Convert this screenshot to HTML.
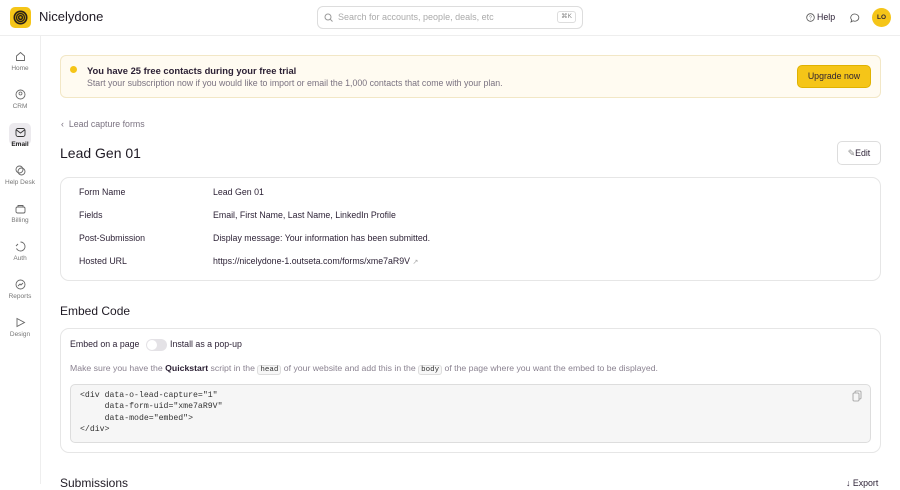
<!DOCTYPE html>
<html><head><style>
*{box-sizing:border-box;margin:0;padding:0}
body{width:900px;height:484px;overflow:hidden;background:#fff;font-family:"Liberation Sans",sans-serif;color:#2a1f33;position:relative;font-size:9px}
.abs{position:absolute}
.hdr{left:0;top:0;width:900px;height:36px;border-bottom:1px solid #eee}
.side{left:0;top:36px;width:41px;height:448px;border-right:1px solid #eee}
.nav{position:absolute;left:0;width:40px;text-align:center;font-size:6.5px;color:#777}
.nav svg{display:block;margin:0 auto 3px}
.card{border:1px solid #e6e6e6;border-radius:9px}
.lbl{position:absolute;left:79px;font-size:8.8px;color:#2a1f33}
.val{position:absolute;left:213px;font-size:8.8px;color:#2a1f33}
code.k{font-family:"Liberation Mono",monospace;font-size:7.5px;border:1px solid #ddd;background:#f7f7f7;border-radius:3px;padding:0 2px;color:#333}
</style></head><body>
<div class="abs hdr"></div>
<div class="abs" style="left:10px;top:7px;width:21px;height:21px;border-radius:5px;background:#f5c518"><svg width="21" height="21" viewBox="0 0 21 21"><circle cx="10.5" cy="10.5" r="7" fill="#2a1f1a"/><circle cx="10.5" cy="10.5" r="5" fill="none" stroke="#c9a000" stroke-width=".8"/><circle cx="10.5" cy="10.5" r="3" fill="none" stroke="#c9a000" stroke-width=".8"/><circle cx="10.5" cy="10.5" r="1.2" fill="#c9a000"/></svg></div>
<div class="abs" style="left:39px;top:9px;font-size:13px;color:#1f1a24">Nicelydone</div>
<div class="abs" style="left:317px;top:6px;width:266px;height:23px;border:1px solid #ddd;border-radius:6px"></div>
<svg class="abs" style="left:324px;top:13px" width="9" height="9" viewBox="0 0 9 9"><circle cx="4" cy="4" r="3" fill="none" stroke="#999" stroke-width="1"/><path d="M6.2 6.2L8.5 8.5" stroke="#999"/></svg>
<div class="abs" style="left:338px;top:12px;font-size:9px;color:#aaa">Search for accounts, people, deals, etc</div>
<div class="abs" style="left:557px;top:11px;width:19px;height:12px;border:1px solid #ddd;border-radius:3px;font-size:6.5px;color:#888;text-align:center;line-height:10px">⌘K</div>
<svg class="abs" style="left:806px;top:13px" width="9" height="9"><circle cx="4.5" cy="4.5" r="3.8" fill="none" stroke="#555" stroke-width=".8"/><text x="3" y="6.5" font-size="5" fill="#555">?</text></svg>
<div class="abs" style="left:817px;top:12px;font-size:8.8px">Help</div>
<svg class="abs" style="left:850px;top:13px" width="10" height="10"><path d="M5 1a4 3.6 0 1 1-2 6.8L1 9l.6-2.2A4 3.6 0 0 1 5 1z" fill="none" stroke="#555" stroke-width=".8"/></svg>
<div class="abs" style="left:872px;top:8px;width:19px;height:19px;border-radius:50%;background:#f5c518;font-size:6.5px;font-weight:bold;text-align:center;line-height:19px">LO</div>

<div class="abs side"></div>
<div class="nav" style="top:51px"><svg width="11" height="11" viewBox="0 0 11 11"><path d="M1.5 5L5.5 1.5 9.5 5V9.5H1.5Z" fill="none" stroke="#666" stroke-width=".9"/></svg>Home</div>
<div class="nav" style="top:89px"><svg width="11" height="11"><circle cx="5.5" cy="5.5" r="4.5" fill="none" stroke="#666" stroke-width=".9"/><circle cx="5.5" cy="4.5" r="1.5" fill="none" stroke="#666" stroke-width=".8"/></svg>CRM</div>
<div class="abs" style="left:9px;top:123px;width:22px;height:22px;border-radius:5px;background:#eceaee"></div>
<div class="nav" style="top:127px;color:#222;font-weight:bold"><svg width="11" height="11"><rect x="1" y="1.5" width="9" height="8" rx="2" fill="none" stroke="#333" stroke-width=".9"/><path d="M1.5 3L5.5 6 9.5 3" fill="none" stroke="#333" stroke-width=".9"/></svg>Email</div>
<div class="nav" style="top:165px"><svg width="11" height="11"><circle cx="4.5" cy="4.5" r="3.5" fill="none" stroke="#666" stroke-width=".9"/><circle cx="6.5" cy="6.5" r="3.5" fill="none" stroke="#666" stroke-width=".9"/></svg>Help Desk</div>
<div class="nav" style="top:203px"><svg width="11" height="11"><rect x="1" y="4" width="9" height="6" rx="1.5" fill="none" stroke="#666" stroke-width=".9"/><path d="M3 4V2.5h5V4" fill="none" stroke="#666" stroke-width=".9"/></svg>Billing</div>
<div class="nav" style="top:241px"><svg width="11" height="11"><path d="M5.5 1A4.5 4.5 0 1 1 1.5 7.5M1 5L3 3" fill="none" stroke="#666" stroke-width=".9"/></svg>Auth</div>
<div class="nav" style="top:279px"><svg width="11" height="11"><circle cx="5.5" cy="5.5" r="4.5" fill="none" stroke="#666" stroke-width=".9"/><path d="M3 7L5 5 6 6 8 4" fill="none" stroke="#666" stroke-width=".9"/></svg>Reports</div>
<div class="nav" style="top:317px"><svg width="11" height="11"><path d="M2 1.5L9.5 5.5 2 9.5Z" fill="none" stroke="#666" stroke-width=".9"/></svg>Design</div>

<div class="abs" style="left:60px;top:55px;width:821px;height:43px;background:#fffbf1;border:1px solid #f2e7c6;border-radius:6px"></div>
<div class="abs" style="left:70px;top:66px;width:7px;height:7px;border-radius:50%;background:#f5c518"></div>
<div class="abs" style="left:87px;top:65px;font-size:9.4px;font-weight:bold;color:#2a1f33">You have 25 free contacts during your free trial</div>
<div class="abs" style="left:87px;top:78px;font-size:8.8px;color:#7a7280">Start your subscription now if you would like to import or email the 1,000 contacts that come with your plan.</div>
<div class="abs" style="left:797px;top:65px;width:74px;height:23px;background:#f5c518;border:1px solid #e0b200;border-radius:5px;font-size:8.8px;text-align:center;line-height:21px">Upgrade now</div>

<div class="abs" style="left:61px;top:119px;font-size:8.8px;color:#7a7280">‹&nbsp; Lead capture forms</div>
<div class="abs" style="left:60px;top:145px;font-size:14px;color:#1f1a24">Lead Gen 01</div>
<div class="abs" style="left:837px;top:141px;width:44px;height:24px;border:1px solid #ddd;border-radius:5px;font-size:8.8px;text-align:center;line-height:22px"><span style="color:#888">✎</span>Edit</div>

<div class="abs card" style="left:60px;top:177px;width:821px;height:104px"></div>
<div class="lbl" style="top:187px">Form Name</div><div class="val" style="top:187px">Lead Gen 01</div>
<div class="lbl" style="top:210px">Fields</div><div class="val" style="top:210px">Email, First Name, Last Name, LinkedIn Profile</div>
<div class="lbl" style="top:233px">Post-Submission</div><div class="val" style="top:233px">Display message: Your information has been submitted.</div>
<div class="lbl" style="top:256px">Hosted URL</div><div class="val" style="top:256px">https://nicelydone-1.outseta.com/forms/xme7aR9V <span style="color:#aaa;font-size:7px">↗</span></div>

<div class="abs" style="left:60px;top:304px;font-size:12px;color:#1f1a24">Embed Code</div>
<div class="abs card" style="left:60px;top:328px;width:821px;height:125px"></div>
<div class="abs" style="left:70px;top:339px;font-size:8.8px">Embed on a page</div>
<div class="abs" style="left:146px;top:339px;width:21px;height:12px;border-radius:6px;background:#e4e2e6"><div style="margin:1px;width:10px;height:10px;border-radius:50%;background:#fff"></div></div>
<div class="abs" style="left:170px;top:339px;font-size:8.8px">Install as a pop-up</div>
<div class="abs" style="left:70px;top:363px;font-size:8.7px;color:#8a8290">Make sure you have the <b style="color:#2a1f33">Quickstart</b> script in the <code class="k">head</code> of your website and add this in the <code class="k">body</code> of the page where you want the embed to be displayed.</div>
<div class="abs" style="left:70px;top:384px;width:801px;height:59px;background:#f6f6f6;border:1px solid #ddd;border-radius:5px"></div>
<pre class="abs" style="left:80px;top:390px;font-family:'Liberation Mono',monospace;font-size:8.2px;line-height:11.3px;color:#333">&lt;div data-o-lead-capture="1"
     data-form-uid="xme7aR9V"
     data-mode="embed"&gt;
&lt;/div&gt;</pre>
<svg class="abs" style="left:852px;top:390px" width="10" height="12"><rect x="3" y="1" width="6" height="8" rx="1" fill="none" stroke="#999" stroke-width=".8"/><rect x="1" y="3" width="6" height="8" rx="1" fill="#f6f6f6" stroke="#999" stroke-width=".8"/></svg>
<div class="abs" style="left:60px;top:476px;font-size:12px;color:#1f1a24">Submissions</div>
<div class="abs" style="left:846px;top:478px;font-size:8.8px">↓ Export</div>
</body></html>
